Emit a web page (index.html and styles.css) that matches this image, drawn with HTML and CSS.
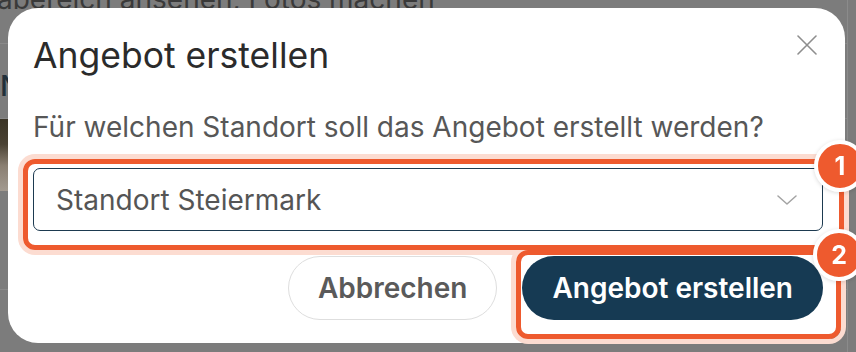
FILE: index.html
```html
<!DOCTYPE html>
<html lang="de">
<head>
    <meta charset="UTF-8" />
    <title>Angebot erstellen</title>
    <link rel="stylesheet" href="styles.css">
</head>
<body>
    <div class="page">
        <div class="page-head">
            <p class="page-text">abereich ansehen, Fotos machen</p>
        </div>
        <div class="page-row">
            <span class="page-label">N</span>
        </div>
        <div class="page-photo"></div>
        <div class="page-row tall"></div>
    </div>

    <div class="modal" role="dialog" aria-labelledby="modal-title">
        <div class="modal-head">
            <h2 id="modal-title" class="modal-title">Angebot erstellen</h2>
            <button type="button" class="close" aria-label="Schließen">
                <svg width="20" height="20" viewBox="0 0 20 20">
                    <path d="M1 1 L19 19 M19 1 L1 19" stroke="#8e8e8e" stroke-width="1.6" fill="none" stroke-linecap="round"/>
                </svg>
            </button>
        </div>

        <p class="modal-text">Für welchen Standort soll das Angebot erstellt werden?</p>

        <div class="select marked">
            <span class="select-value">Standort Steiermark</span>
            <svg class="chevron" width="20" height="10" viewBox="0 0 20 10">
                <path d="M1 1 L10 9 L19 1" stroke="#a3a3a3" stroke-width="1.5" fill="none" stroke-linecap="round" stroke-linejoin="round"/>
            </svg>
            <span class="badge">1</span>
        </div>

        <div class="actions">
            <button type="button" class="btn">Abbrechen</button>
            <button type="button" class="btn primary marked">Angebot erstellen<span class="badge badge-two">2</span></button>
        </div>
    </div>
</body>
</html>
```

FILE: styles.css
```css
body {
    margin: 0;
    background: #7c7c7c;
    font-family: Inter, 'Noto Sans', sans-serif;
    height: 352px;
    overflow: hidden;
}

/* page behind the dialog */
.page {
    width: 847px;
    height: 352px;
    border-right: 1px solid #8b8b8b;
}

.page-head {
    display: flow-root;
    height: 43px;
    overflow: hidden;
    border-bottom: 1px solid #898989;
}

.page-text {
    margin: -15px 0 0 -3px;
    font-size: 28px;
    line-height: 28px;
    color: #3a3a3a;
    white-space: nowrap;
}

.page-row {
    height: 74px;
    border-bottom: 1px solid #898989;
    display: flex;
    align-items: center;
}

.page-row.tall {
    height: 98px;
}

.page-label {
    font-size: 29px;
    font-weight: 500;
    color: #22303a;
    padding-top: 8px;
}

.page-photo {
    width: 80px;
    height: 72px;
    background: linear-gradient(to bottom, #3a3426 0%, #4a4234 35%, #8a7f72 65%, #a39a90 100%);
}

/* dialog */
.modal {
    position: fixed;
    top: 8px;
    left: 8px;
    width: 837px;
    height: 335px;
    box-sizing: border-box;
    background: #fff;
    border-radius: 30px;
    padding: 27px 22px 0 25px;
}

.modal-head {
    display: flex;
    justify-content: space-between;
    align-items: flex-start;
}

.modal-title {
    margin: 0;
    font-size: 35.5px;
    line-height: 42px;
    font-weight: 400;
    color: #2b2b2b;
}

.close {
    background: none;
    border: none;
    padding: 0;
    margin: 0 6px 0 0;
    width: 20px;
    height: 20px;
    cursor: pointer;
}

.close svg {
    display: block;
}

.modal-text {
    margin: 33px 0 0;
    font-size: 28px;
    line-height: 34px;
    color: #575757;
}

.select {
    position: relative;
    margin-top: 24px;
    height: 63px;
    box-sizing: border-box;
    border: 1.5px solid #1d3a50;
    border-radius: 7px;
    display: flex;
    align-items: center;
    justify-content: space-between;
    padding: 0 25px 0 22px;
    font-size: 28px;
    color: #555;
}

.chevron {
    display: block;
}

.actions {
    margin-top: 25px;
    display: flex;
    justify-content: flex-end;
    gap: 25px;
}

.btn {
    position: relative;
    height: 64px;
    padding: 0 29px;
    border-radius: 32px;
    border: 1.5px solid #dedede;
    background: #fff;
    color: #5a5a5a;
    font-family: inherit;
    font-size: 28px;
    font-weight: 600;
    cursor: pointer;
}

.btn.primary {
    border: none;
    padding: 0 30px;
    background: #163a53;
    color: #fff;
}

/* orange annotation frames */
.marked::before,
.marked::after {
    content: "";
    position: absolute;
    box-sizing: border-box;
    border-radius: 12px;
    pointer-events: none;
}

.marked::before {
    z-index: 0;
    box-shadow: 0 0 0 5px #fcdcd1;
}

.marked::after {
    z-index: 1;
    border: 5px solid #ee5a2e;
}

.select::before,
.select::after {
    top: -10.5px;
    left: -11.5px;
    right: -21.5px;
    bottom: -19.5px;
}

.btn.primary::before,
.btn.primary::after {
    top: -6px;
    left: -6px;
    right: -18px;
    bottom: -19px;
}

.badge {
    position: absolute;
    z-index: 2;
    top: -29px;
    right: -44px;
    width: 44px;
    height: 44px;
    border: 4px solid #fff;
    border-radius: 50%;
    background: #ee5a2e;
    color: #fff;
    font-size: 25px;
    font-weight: 700;
    display: flex;
    align-items: center;
    justify-content: center;
    box-shadow: 0 1px 4px rgba(0, 0, 0, 0.15);
}

.badge-two {
    top: -27px;
    right: -42px;
}
```
